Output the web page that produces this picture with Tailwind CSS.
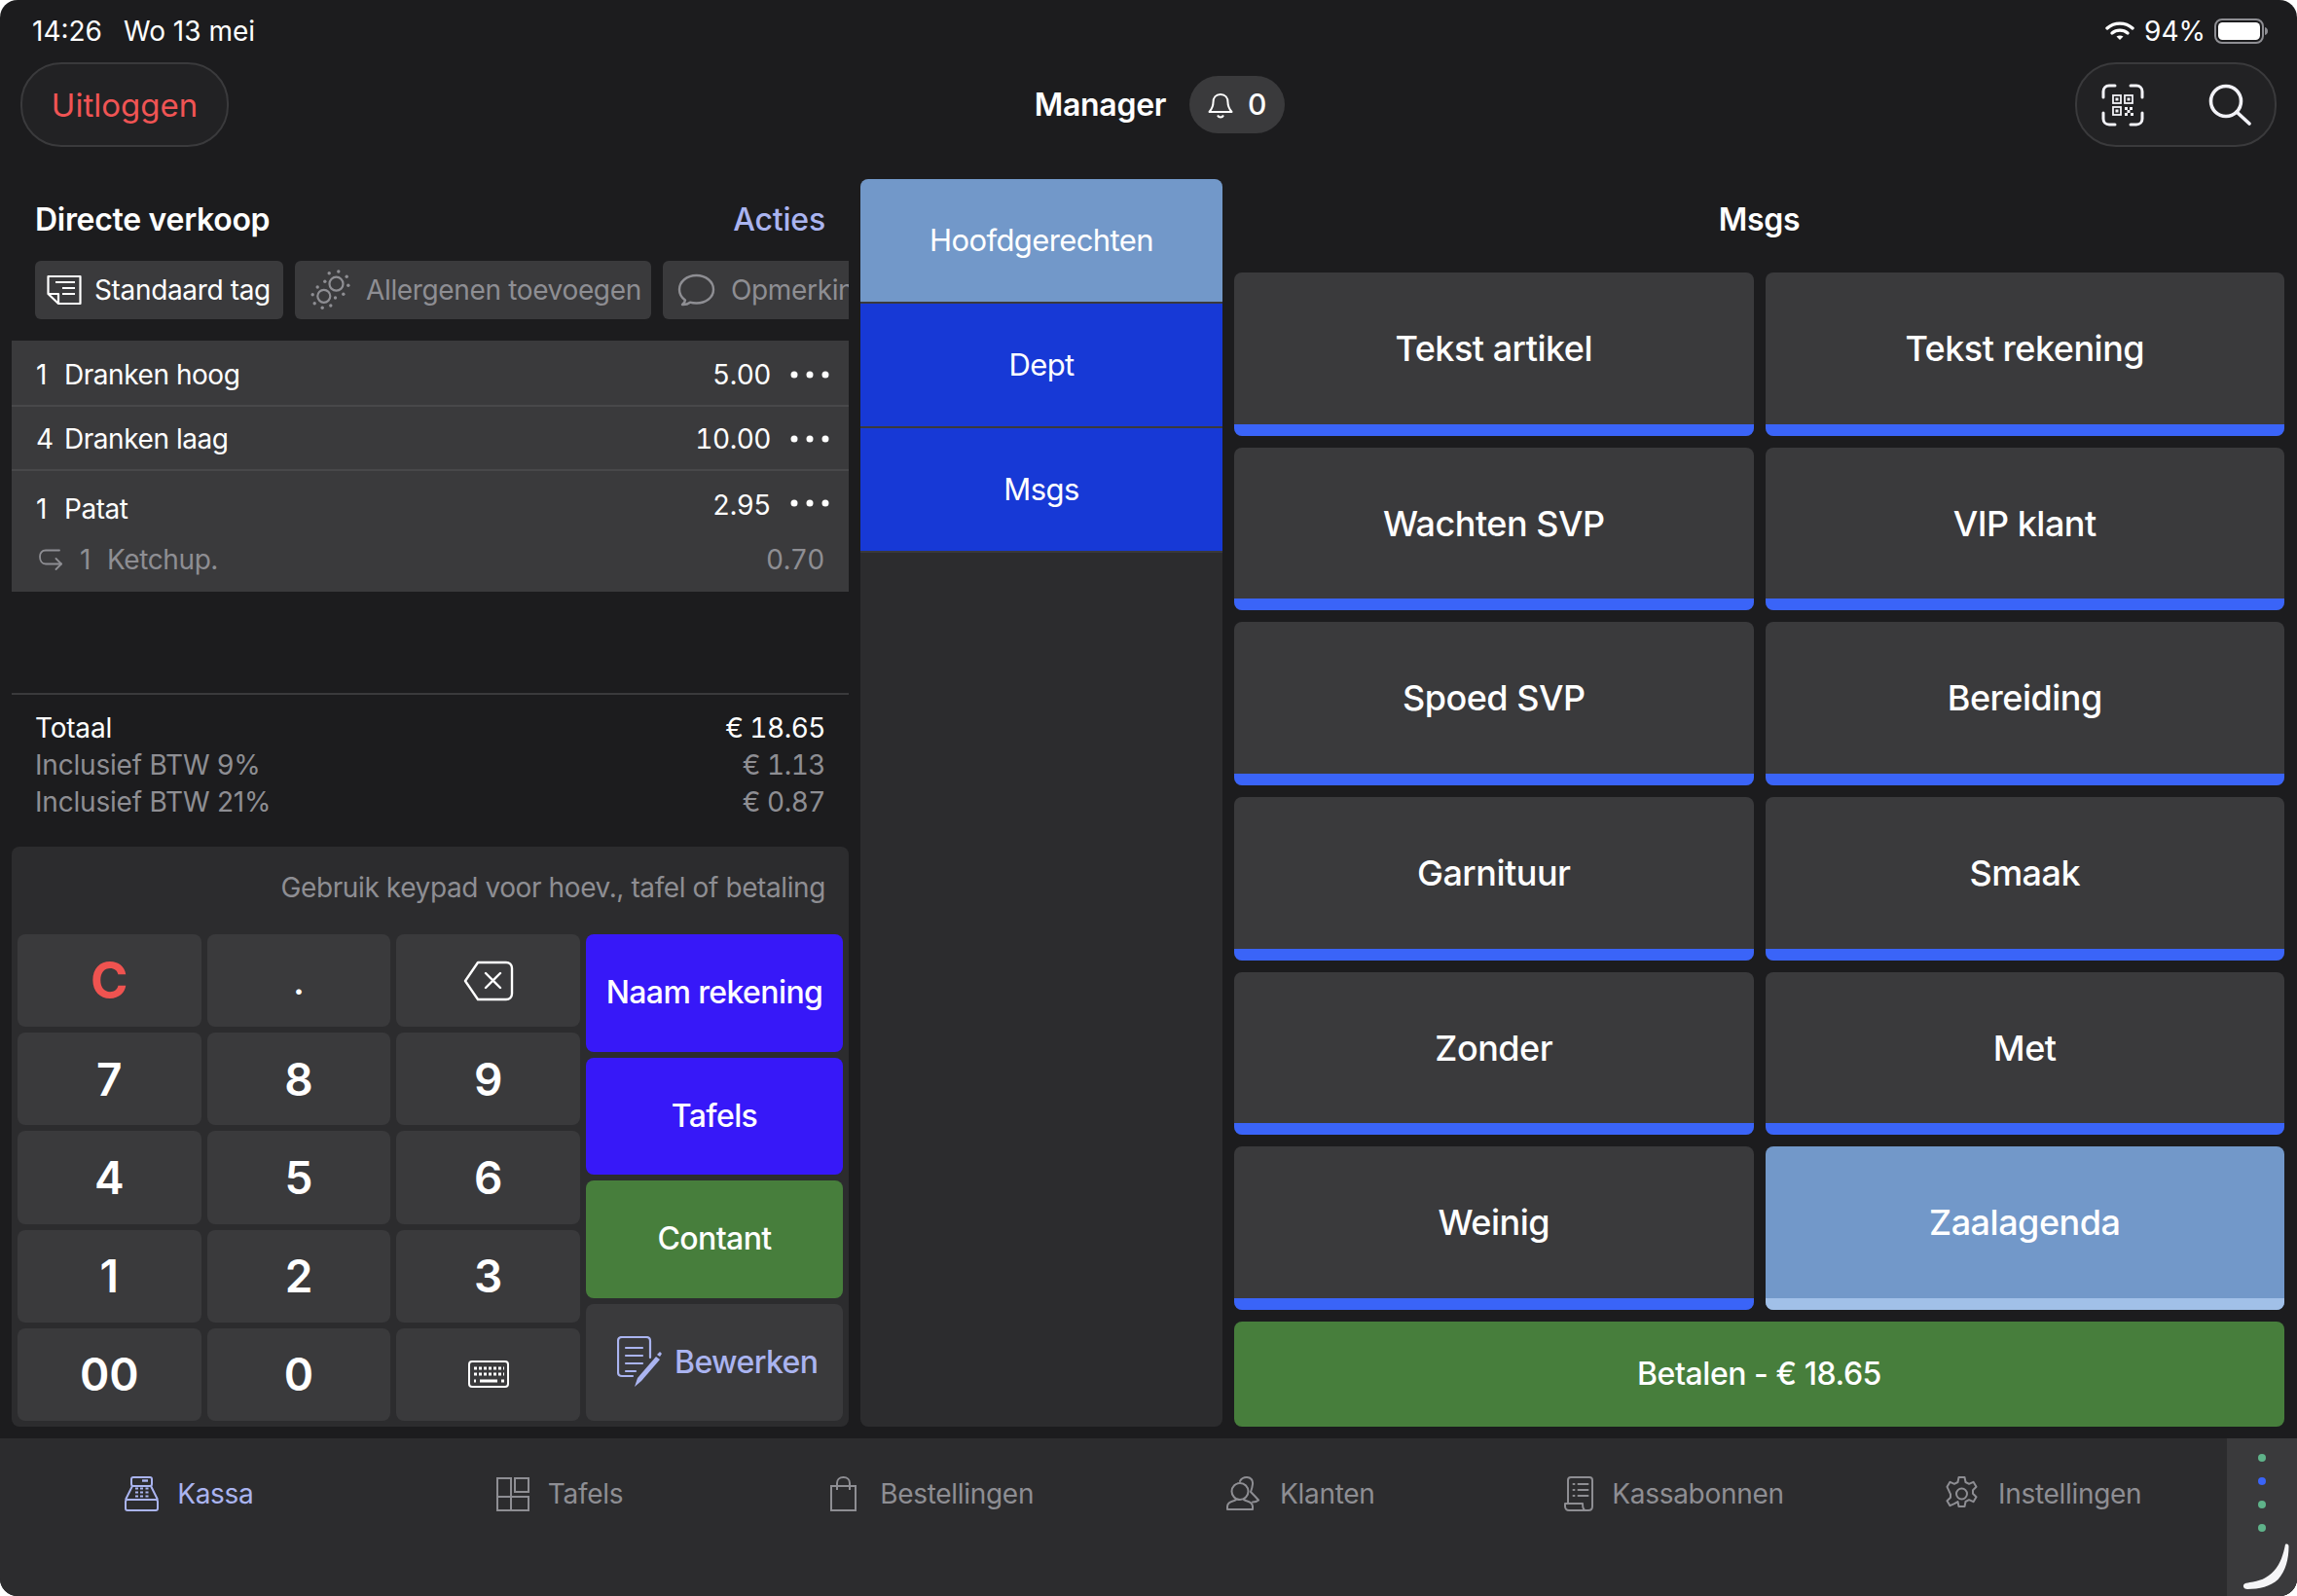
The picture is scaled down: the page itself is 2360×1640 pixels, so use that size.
<!DOCTYPE html>
<html lang="nl">
<head>
<meta charset="UTF-8">
<title>Kassa</title>
<script src="https://cdn.jsdelivr.net/npm/@tailwindcss/browser@4"></script>
</head>
<body class="bg-white">
<div class="w-[2360px] h-[1640px] flex flex-col bg-[#1c1c1e] rounded-[18px] overflow-hidden text-white font-['Inter',sans-serif]">

  <!-- status bar -->
  <div class="h-[64px] flex items-center justify-between pl-[33px] pr-[29px] text-[28px]">
    <div class="flex gap-[22px]"><span>14:26</span><span>Wo 13 mei</span></div>
    <div class="flex items-center">
      <svg width="30" height="22" viewBox="0 0 30 20" fill="none" stroke="#fff" stroke-width="3.4" stroke-linecap="round"><path d="M2 7c7.500-6.500 18.500-6.500 26 0"/><path d="M7 12c4.700-3.800 11.300-3.800 16 0"/><path d="M15 19l-3.500-3.500c2-1.500 5-1.500 7 0z" fill="#fff" stroke="none"/></svg>
      <span class="ml-[10px]">94%</span>
      <svg class="ml-[9px]" width="56" height="26" viewBox="0 0 56 26"><rect x="1" y="1" width="49" height="24" rx="7" fill="none" stroke="#8e8e93" stroke-width="2"/><rect x="4" y="4" width="43" height="18" rx="4.500" fill="#fff"/><path d="M52 9c2 .5 3 2 3 4s-1 3.500-3 4z" fill="#8e8e93"/></svg>
    </div>
  </div>

  <!-- header -->
  <div class="h-[87px] flex items-center justify-between pl-[21px] pr-[21px] relative">
    <button class="w-[214px] h-[87px] pt-[2px] rounded-[42px] border-2 border-[#3a3a3c] bg-[#222224] text-[33px] text-[#f05454]">Uitloggen</button>
    <div class="ml-[16px] flex items-center">
      <span class="text-[32px] font-semibold tracking-[-0.3px]">Manager</span>
      <div class="ml-[24px] w-[98px] h-[59px] rounded-full bg-[#3a3a3c] flex items-center justify-center gap-[15px] text-[30px] font-medium">
        <svg width="26" height="28" viewBox="0 0 26 28" fill="none" stroke="#fff" stroke-width="2" stroke-linejoin="round"><path d="M13 3c-5 0-7.500 3.500-7.500 8 0 5-1.500 7-4 10h23c-2.500-3-4-5-4-10 0-4.500-2.500-8-7.500-8z"/><path d="M10 24.500c.7 1.500 1.700 2 3 2s2.300-.5 3-2"/></svg>
        <span>0</span>
      </div>
    </div>
    <div class="w-[207px] h-[87px] rounded-[42px] border-2 border-[#3a3a3c] bg-[#222224] flex items-center justify-between pl-[25px] pr-[24px]">
      <svg width="44" height="44" viewBox="0 0 44 44" fill="none" stroke="#f2f2f7" stroke-width="3" stroke-linecap="round"><path d="M2 14V8c0-3.500 2.500-6 6-6h6M30 2h6c3.500 0 6 2.500 6 6v6M42 30v6c0 3.500-2.500 6-6 6h-6M14 42H8c-3.500 0-6-2.500-6-6v-6"/><g stroke-width="1.800"><rect x="12" y="12" width="8" height="8"/><rect x="24" y="12" width="8" height="8"/><rect x="12" y="24" width="8" height="8"/></g><g fill="#f2f2f7" stroke="none"><rect x="14.500" y="14.500" width="3" height="3"/><rect x="26.500" y="14.500" width="3" height="3"/><rect x="14.500" y="26.500" width="3" height="3"/><rect x="24" y="24" width="3" height="3"/><rect x="29" y="24" width="3" height="3"/><rect x="26.500" y="27" width="3" height="3"/><rect x="24" y="30" width="3" height="3"/><rect x="30" y="30" width="3" height="3"/></g></svg>
      <svg width="44" height="44" viewBox="0 0 44 44" fill="none" stroke="#f2f2f7" stroke-width="3.600" stroke-linecap="round"><circle cx="18" cy="18" r="15.500"/><path d="M29 29l13 12"/></svg>
    </div>
  </div>

  <!-- main -->
  <div class="mt-[33px] h-[1282px] flex gap-[12px] px-[12px]">

    <!-- order column -->
    <div class="w-[860px] flex flex-col">
      <div class="h-[84px] flex items-center justify-between px-[24px]">
        <span class="text-[32px] font-semibold tracking-[-0.3px]">Directe verkoop</span>
        <span class="text-[32px] font-medium tracking-[-0.2px] text-[#aab4f0]">Acties</span>
      </div>
      <div class="h-[60px] flex gap-[12px] pl-[24px] overflow-hidden text-[28px] tracking-[-0.35px] whitespace-nowrap">
        <div class="shrink-0 w-[255px] rounded-[6px] bg-[#3a3a3c] flex items-center pl-[12px] gap-[13px]">
          <svg width="36" height="32" viewBox="0 0 36 32" fill="none" stroke="#fff" stroke-width="2.200" stroke-linejoin="round"><path d="M1.500 2h33v28H12L1.500 20z"/><path d="M1.500 20H12v10"/><path d="M9 8h20M16 14h13M16 20h13"/></svg>
          <span>Standaard tag</span>
        </div>
        <div class="shrink-0 w-[366px] rounded-[6px] bg-[#3a3a3c] flex items-center pl-[16px] gap-[16px] text-[#8e8e93]">
          <svg width="41" height="42" viewBox="0 0 41 42" fill="none" stroke="#8e8e93" stroke-width="2.200"><circle cx="26.500" cy="14.700" r="7"/><circle cx="13.800" cy="27.300" r="6.500"/><g fill="#8e8e93" stroke="none"><circle cx="19.200" cy="3.700" r="1.700"/><circle cx="28.800" cy="2" r="1.700"/><circle cx="37.200" cy="7.300" r="1.700"/><circle cx="38.800" cy="16.300" r="1.700"/><circle cx="33.800" cy="25.300" r="1.700"/><circle cx="25.500" cy="29" r="1.700"/><circle cx="14.800" cy="12.300" r="1.700"/><circle cx="7.200" cy="18" r="1.700"/><circle cx="2.200" cy="25.700" r="1.700"/><circle cx="4.200" cy="34.700" r="1.700"/><circle cx="12.200" cy="39.300" r="1.700"/><circle cx="20.800" cy="37" r="1.700"/></g></svg>
          <span>Allergenen toevoegen</span>
        </div>
        <div class="shrink-0 w-[300px] rounded-[6px] bg-[#3a3a3c] flex items-center pl-[15px] gap-[16px] text-[#8e8e93]">
          <svg width="39" height="34" viewBox="0 0 39 34" fill="none" stroke="#8e8e93" stroke-width="2.400" stroke-linejoin="round"><path d="M19.500 2C9.500 2 2 8.500 2 16.500c0 4.500 2.500 8.500 6 11-.3 1.800-1.300 3.300-3 4.500 3.200.2 6-.7 8-2.300 2 .6 4.200.8 6.500.8 10 0 17.500-6 17.500-14S29.500 2 19.500 2z"/></svg>
          <span>Opmerkingen</span>
        </div>
      </div>

      <!-- order lines -->
      <div class="mt-[22px] h-[258px] bg-[#3a3a3c] text-[28px]">
        <div class="h-[68px] pt-[3px] border-b-2 border-[#48484a] flex items-center pl-[25px] pr-[20px]">
          <span class="w-[29px]">1</span><span class="flex-1 tracking-[-0.45px]">Dranken hoog</span><span class="tabular-nums tracking-[-0.5px]">5.00</span>
          <svg class="ml-[20px]" width="40" height="8" viewBox="0 0 40 8" fill="#fff"><circle cx="4" cy="4" r="3.500"/><circle cx="20" cy="4" r="3.500"/><circle cx="36" cy="4" r="3.500"/></svg>
        </div>
        <div class="h-[66px] pt-[2px] border-b-2 border-[#48484a] flex items-center pl-[25px] pr-[20px]">
          <span class="w-[29px]">4</span><span class="flex-1 tracking-[-0.45px]">Dranken laag</span><span class="tabular-nums tracking-[-0.5px]">10.00</span>
          <svg class="ml-[20px]" width="40" height="8" viewBox="0 0 40 8" fill="#fff"><circle cx="4" cy="4" r="3.500"/><circle cx="20" cy="4" r="3.500"/><circle cx="36" cy="4" r="3.500"/></svg>
        </div>
        <div class="h-[124px] pl-[25px] pr-[20px] pt-[14px]">
          <div class="h-[38px] flex">
            <span class="w-[29px] pt-[4px]">1</span><span class="flex-1 pt-[4px] tracking-[-0.45px]">Patat</span><span class="tabular-nums tracking-[-0.5px]">2.95</span>
            <svg class="ml-[20px] mt-[15px]" width="40" height="8" viewBox="0 0 40 8" fill="#fff"><circle cx="4" cy="4" r="3.500"/><circle cx="20" cy="4" r="3.500"/><circle cx="36" cy="4" r="3.500"/></svg>
          </div>
          <div class="mt-[20px] h-[38px] flex items-center pl-[3px] pr-[5px] text-[#8e8e93]">
            <svg width="24" height="22" viewBox="0 0 24 22" fill="none" stroke="#8e8e93" stroke-width="1.800" stroke-linecap="round" stroke-linejoin="round"><path d="M21 1.500H7C3 1.500 1 4 1 8s2 7.500 6 7.500h16"/><path d="M17.500 10l5.500 5.500-5.500 5.500"/></svg>
            <span class="ml-[18px] w-[28px]">1</span><span class="flex-1 tracking-[-0.4px]">Ketchup.</span><span class="tabular-nums tracking-[-0.5px]">0.70</span>
          </div>
        </div>
      </div>

      <!-- totals -->
      <div class="mt-[104px] border-t-2 border-[#3a3a3c] pt-[15px] px-[24px] text-[28px] text-[#8e8e93]">
        <div class="h-[38px] flex items-center justify-between text-white"><span class="tracking-[-0.2px]">Totaal</span><span class="tabular-nums tracking-[-0.5px]">€ 18.65</span></div>
        <div class="h-[38px] flex items-center justify-between"><span class="tracking-[-0.2px]">Inclusief BTW 9%</span><span class="tabular-nums tracking-[-0.5px]">€ 1.13</span></div>
        <div class="h-[38px] flex items-center justify-between"><span class="tracking-[-0.2px]">Inclusief BTW 21%</span><span class="tabular-nums tracking-[-0.5px]">€ 0.87</span></div>
      </div>

      <!-- keypad -->
      <div class="mt-[27px] h-[596px] rounded-[8px] bg-[#2c2c2e] px-[6px] pb-[6px] flex flex-col">
        <div class="h-[90px] pt-[21px] pr-[18px] text-right text-[28px] tracking-[-0.4px] text-[#8e8e93]">Gebruik keypad voor hoev., tafel of betaling</div>
        <div class="flex-1 flex gap-[6px]">
          <div class="w-[578px] grid grid-cols-3 grid-rows-5 gap-[6px] text-[46px] font-semibold">
            <button class="rounded-[8px] bg-[#3a3a3c] text-[#ef5350] text-[52px] font-bold">C</button>
            <button class="rounded-[8px] pt-[3px] bg-[#3a3a3c] text-[36px]">.</button>
            <button class="rounded-[8px] bg-[#3a3a3c] flex items-center justify-center">
              <svg width="52" height="42" viewBox="0 0 52 42" fill="none" stroke="#fff" stroke-width="2.400" stroke-linejoin="round" stroke-linecap="round"><path d="M15 2h29c3.500 0 6 2.500 6 6v26c0 3.500-2.500 6-6 6H15L2 21z"/><path d="M23 13l15 15M38 13L23 28"/></svg>
            </button>
            <button class="rounded-[8px] pt-[1px] bg-[#3a3a3c]">7</button>
            <button class="rounded-[8px] pt-[1px] bg-[#3a3a3c]">8</button>
            <button class="rounded-[8px] pt-[1px] bg-[#3a3a3c]">9</button>
            <button class="rounded-[8px] pt-[1px] bg-[#3a3a3c]">4</button>
            <button class="rounded-[8px] pt-[1px] bg-[#3a3a3c]">5</button>
            <button class="rounded-[8px] pt-[1px] bg-[#3a3a3c]">6</button>
            <button class="rounded-[8px] pt-[1px] bg-[#3a3a3c]">1</button>
            <button class="rounded-[8px] pt-[1px] bg-[#3a3a3c]">2</button>
            <button class="rounded-[8px] pt-[1px] bg-[#3a3a3c]">3</button>
            <button class="rounded-[8px] pt-[1px] bg-[#3a3a3c]">00</button>
            <button class="rounded-[8px] pt-[1px] bg-[#3a3a3c]">0</button>
            <button class="rounded-[8px] bg-[#3a3a3c] flex items-center justify-center">
              <svg width="42" height="28" viewBox="0 0 42 28" fill="none" stroke="#fff" stroke-width="2"><rect x="1" y="1" width="40" height="26" rx="3"/><path stroke-width="3" stroke-dasharray="3 2" d="M6 8h31M6 14h31"/><path stroke-width="3" d="M12 21h18M6 21h2M34 21h3"/></svg>
            </button>
          </div>
          <div class="w-[264px] flex flex-col gap-[6px] text-[32px] font-medium tracking-[-0.6px]">
            <button class="flex-1 rounded-[8px] bg-[#3718f8]">Naam rekening</button>
            <button class="flex-1 rounded-[8px] bg-[#3718f8]">Tafels</button>
            <button class="flex-1 rounded-[8px] bg-[#477e3c]">Contant</button>
            <button class="flex-1 rounded-[8px] bg-[#3a3a3c] flex items-center pl-[32px] gap-[12px] text-[#aab4f0]">
              <svg width="47" height="54" viewBox="0 0 47 54" fill="none" stroke="#aab4f0" stroke-width="2.200" stroke-linecap="round" stroke-linejoin="round"><path d="M34 22V5c0-2.500-1.500-4-4-4H5C2.500 1 1 2.500 1 5v32c0 2.500 1.500 4 4 4h11"/><path d="M9 12h17M9 20h17M9 28h17M9 36h10"/><path d="M18 52l3-9 19-22 4 3-19 22z" fill="#aab4f0" stroke="none"/><path d="M41 19l3-3 2 2-2 3z" fill="#aab4f0" stroke="none"/></svg>
              <span>Bewerken</span>
            </button>
          </div>
        </div>
      </div>
    </div>

    <!-- categories -->
    <div class="w-[372px] rounded-[8px] bg-[#2c2c2e] overflow-hidden text-[31px] tracking-[-0.6px]">
      <div class="h-[128px] border-b-2 border-[#3a3a3c] bg-[#7298c9] flex items-center justify-center">Hoofdgerechten</div>
      <div class="h-[128px] border-b-2 border-[#3a3a3c] bg-[#1739d6] flex items-center justify-center">Dept</div>
      <div class="h-[128px] border-b-2 border-[#3a3a3c] bg-[#1739d6] flex items-center justify-center">Msgs</div>
    </div>

    <!-- items -->
    <div class="w-[1079px] flex flex-col">
      <div class="h-[84px] flex items-center justify-center text-[32px] font-semibold tracking-[-0.3px]">Msgs</div>
      <div class="mt-[12px] h-[1066px] grid grid-cols-2 grid-rows-6 gap-[12px] text-[36px] font-medium tracking-[-0.5px]">
        <div class="rounded-[8px] overflow-hidden bg-[#3a3a3c] flex flex-col"><div class="flex-1 flex items-center justify-center">Tekst artikel</div><div class="h-[12px] bg-[#3a64f8]"></div></div>
        <div class="rounded-[8px] overflow-hidden bg-[#3a3a3c] flex flex-col"><div class="flex-1 flex items-center justify-center">Tekst rekening</div><div class="h-[12px] bg-[#3a64f8]"></div></div>
        <div class="rounded-[8px] overflow-hidden bg-[#3a3a3c] flex flex-col"><div class="flex-1 pt-[1px] flex items-center justify-center">Wachten SVP</div><div class="h-[12px] bg-[#3a64f8]"></div></div>
        <div class="rounded-[8px] overflow-hidden bg-[#3a3a3c] flex flex-col"><div class="flex-1 pt-[1px] flex items-center justify-center">VIP klant</div><div class="h-[12px] bg-[#3a64f8]"></div></div>
        <div class="rounded-[8px] overflow-hidden bg-[#3a3a3c] flex flex-col"><div class="flex-1 flex items-center justify-center">Spoed SVP</div><div class="h-[12px] bg-[#3a64f8]"></div></div>
        <div class="rounded-[8px] overflow-hidden bg-[#3a3a3c] flex flex-col"><div class="flex-1 flex items-center justify-center">Bereiding</div><div class="h-[12px] bg-[#3a64f8]"></div></div>
        <div class="rounded-[8px] overflow-hidden bg-[#3a3a3c] flex flex-col"><div class="flex-1 flex items-center justify-center">Garnituur</div><div class="h-[12px] bg-[#3a64f8]"></div></div>
        <div class="rounded-[8px] overflow-hidden bg-[#3a3a3c] flex flex-col"><div class="flex-1 flex items-center justify-center">Smaak</div><div class="h-[12px] bg-[#3a64f8]"></div></div>
        <div class="rounded-[8px] overflow-hidden bg-[#3a3a3c] flex flex-col"><div class="flex-1 pt-[1px] flex items-center justify-center">Zonder</div><div class="h-[12px] bg-[#3a64f8]"></div></div>
        <div class="rounded-[8px] overflow-hidden bg-[#3a3a3c] flex flex-col"><div class="flex-1 pt-[1px] flex items-center justify-center">Met</div><div class="h-[12px] bg-[#3a64f8]"></div></div>
        <div class="rounded-[8px] overflow-hidden bg-[#3a3a3c] flex flex-col"><div class="flex-1 flex items-center justify-center">Weinig</div><div class="h-[12px] bg-[#3a64f8]"></div></div>
        <div class="rounded-[8px] overflow-hidden bg-[#7298c9] flex flex-col"><div class="flex-1 flex items-center justify-center">Zaalagenda</div><div class="h-[12px] bg-[#a1c0e8]"></div></div>
      </div>
      <button class="mt-[12px] h-[108px] rounded-[8px] bg-[#477e3c] text-[32px] font-medium tracking-[-0.45px]">Betalen - € 18.65</button>
    </div>
  </div>

  <!-- tab bar -->
  <div class="mt-[12px] h-[162px] flex bg-[#2c2c2e]">
    <div class="w-[2288px] pl-[4px] grid grid-cols-6 items-start pt-[39px] text-[28px] tracking-[-0.3px] text-[#8e8e93]">
      <div class="h-[36px] flex items-center justify-center gap-[19px] text-[#aab4f0]">
        <svg width="35" height="36" viewBox="0 0 35 36" fill="none" stroke="#aab4f0" stroke-width="2" stroke-linejoin="round"><rect x="7" y="1" width="21" height="9" rx="2"/><path d="M18 4.500h6" stroke-width="2.400"/><path d="M8 10L1 24M27 10l7 14"/><rect x="1" y="24" width="33" height="11" rx="2"/><path d="M11 12.500h3M16 12.500h3M21.500 12.500h3M11 16.500h3M16 16.500h3M21.500 16.500h3M11 20.500h3M16 20.500h3M21.500 20.500h3" stroke-width="2"/></svg>
        <span>Kassa</span>
      </div>
      <div class="h-[36px] flex items-center justify-center gap-[19px]">
        <svg width="34" height="35" viewBox="0 0 34 35" fill="none" stroke="#8e8e93" stroke-width="2"><rect x="1" y="1" width="14" height="19"/><rect x="19" y="1" width="14" height="14"/><path d="M1 20h14v14H1zM15 20h18v14H15z"/></svg>
        <span>Tafels</span>
      </div>
      <div class="ml-[4px] h-[36px] flex items-center justify-center gap-[24px]">
        <svg width="27" height="36" viewBox="0 0 27 36" fill="none" stroke="#8e8e93" stroke-width="2"><path d="M1 10h25v25H1z"/><path d="M7 14V7c0-3.500 2.500-6 6.500-6S20 3.500 20 7v7"/></svg>
        <span>Bestellingen</span>
      </div>
      <div class="h-[36px] flex items-center justify-center gap-[21px]">
        <svg width="34" height="36" viewBox="0 0 34 36" fill="none" stroke="#8e8e93" stroke-width="2" stroke-linejoin="round" stroke-linecap="round"><circle cx="14" cy="15.500" r="8.500"/><path d="M1 34v-3c0-3 3-5 7-6l2-1M27 34v-3c0-3-3-5-7-6l-2-1M1 34h26"/><path d="M14 5c1.500-3 4-4 7-4 4 0 6.500 3 6 7-.3 3-1 5.500-2 8 2 2 5 5 8 8.500-1.500 1.500-3.500 2-6 2"/></svg>
        <span>Klanten</span>
      </div>
      <div class="ml-[6px] h-[36px] flex items-center justify-center gap-[19px]">
        <svg width="30" height="36" viewBox="0 0 30 36" fill="none" stroke="#8e8e93" stroke-width="2" stroke-linejoin="round" stroke-linecap="round"><path d="M4 28V4c0-2 1-3 3-3h19c2 0 3 1 3 3v27c0 2.500-1.500 4-4 4H5c-2.500 0-4-2-4-4v-3h18c0 3 0 7 3.500 7"/><path d="M9.500 8h1M14.500 8h10M9.500 14h1M14.500 14h10M9.500 20h1M14.500 20h10"/></svg>
        <span>Kassabonnen</span>
      </div>
      <div class="ml-[3px] h-[36px] flex items-center justify-center gap-[20px]">
        <svg width="35" height="36" viewBox="0 0 35 36" fill="none" stroke="#8e8e93" stroke-width="2" stroke-linejoin="round"><circle cx="17.500" cy="18" r="5.500"/><path d="M14.500 1h6l1 5 3.500 1.800 4.500-2 3 5-3.500 3.500v3.400l3.500 3.500-3 5-4.500-2-3.500 1.800-1 5h-6l-1-5L10 28.200l-4.500 2-3-5L6 21.700v-3.400L2.500 10.800l3-5 4.500 2L13.500 6z"/></svg>
        <span>Instellingen</span>
      </div>
    </div>
    <div class="relative w-[72px] bg-[#3a3a3c] flex flex-col items-center pt-[16px] gap-[16px]">
      <div class="w-[8px] h-[8px] rounded-full bg-[#5fb38a]"></div>
      <div class="w-[8px] h-[8px] rounded-full bg-[#3a64f8]"></div>
      <div class="w-[8px] h-[8px] rounded-full bg-[#5fb38a]"></div>
      <div class="w-[8px] h-[8px] rounded-full bg-[#5fb38a]"></div>
      <svg class="absolute right-[8px] bottom-[6px]" width="48" height="48" viewBox="0 0 48 48" fill="#f5f5f7"><path d="M44 1c2-1 3.500 0 3.500 2 0 13-3 25-11 34C29 44 17 47 5 47c-3.500 0-5-3-3.500-5 1-1 3-1.500 6-2 9-1 18-4 25-12C39 21 42 11 44 1z"/></svg>
    </div>
  </div>
</div>
</body>
</html>
